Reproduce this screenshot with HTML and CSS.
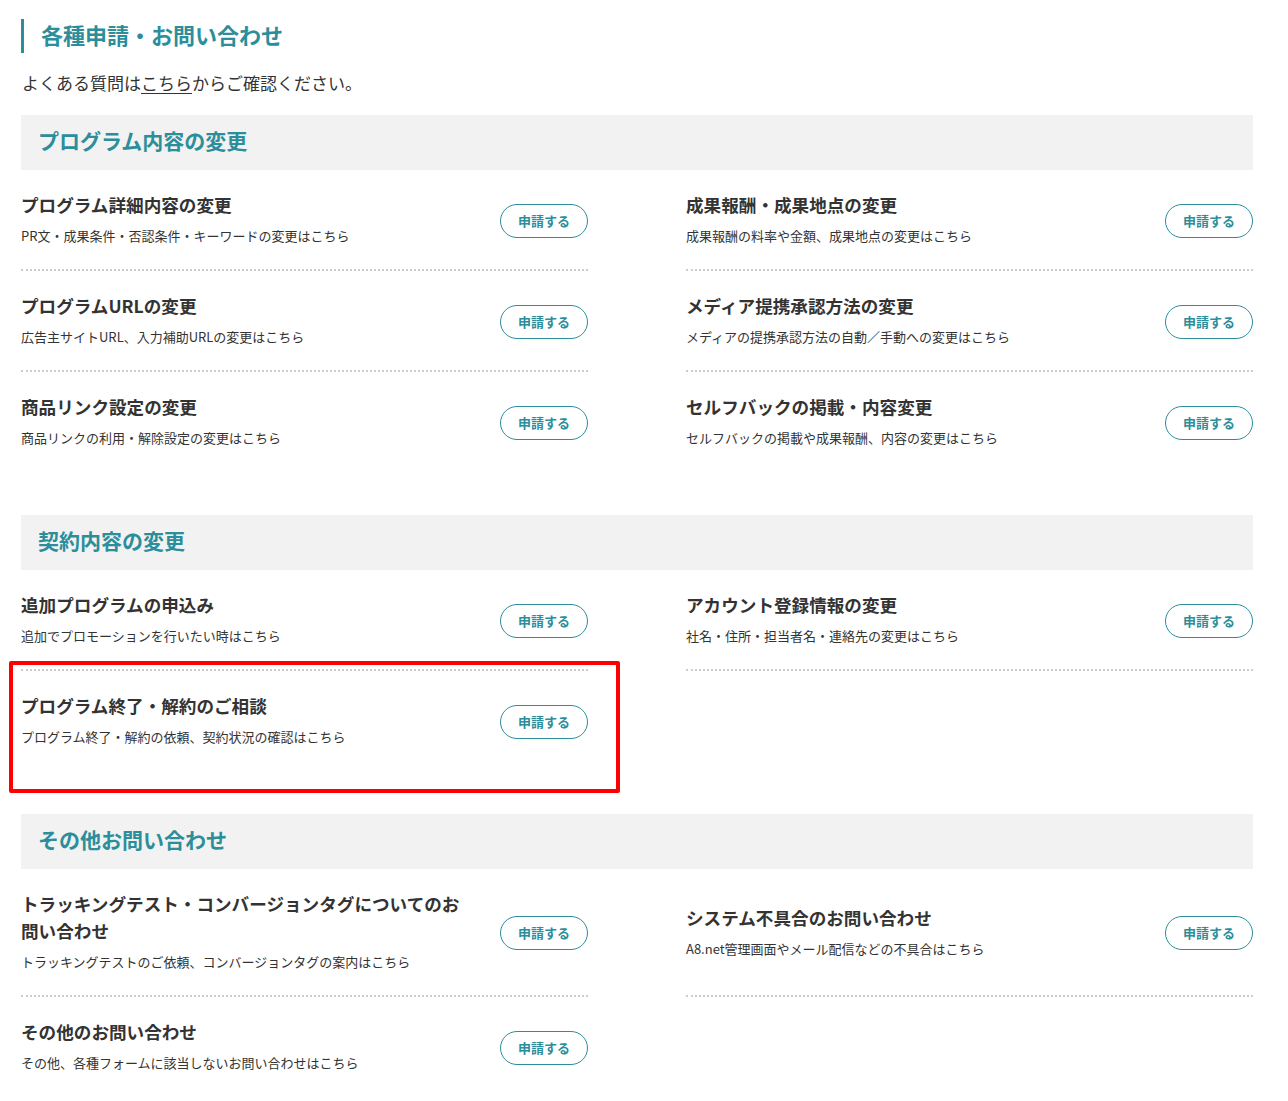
FILE: index.html
```html
<!DOCTYPE html>
<html lang="ja">
<head>
<meta charset="utf-8">
<title>各種申請・お問い合わせ</title>
<link rel="stylesheet" href="styles.css">
</head>
<body>
<div class="page">
  <h1 class="page-title">各種申請・お問い合わせ</h1>
  <p class="intro">よくある質問は<a href="#" class="intro-link">こちら</a>からご確認ください。</p>

  <section class="group">
    <h2 class="group-title">プログラム内容の変更</h2>
    <div class="grid">
      <div class="item">
        <div class="item-text"><h3 class="item-title">プログラム詳細内容の変更</h3><p class="item-desc">PR文・成果条件・否認条件・キーワードの変更はこちら</p></div>
        <a href="#" class="btn">申請する</a>
      </div>
      <div class="item">
        <div class="item-text"><h3 class="item-title">成果報酬・成果地点の変更</h3><p class="item-desc">成果報酬の料率や金額、成果地点の変更はこちら</p></div>
        <a href="#" class="btn">申請する</a>
      </div>
      <div class="item">
        <div class="item-text"><h3 class="item-title">プログラムURLの変更</h3><p class="item-desc">広告主サイトURL、入力補助URLの変更はこちら</p></div>
        <a href="#" class="btn">申請する</a>
      </div>
      <div class="item">
        <div class="item-text"><h3 class="item-title">メディア提携承認方法の変更</h3><p class="item-desc">メディアの提携承認方法の自動／手動への変更はこちら</p></div>
        <a href="#" class="btn">申請する</a>
      </div>
      <div class="item last">
        <div class="item-text"><h3 class="item-title">商品リンク設定の変更</h3><p class="item-desc">商品リンクの利用・解除設定の変更はこちら</p></div>
        <a href="#" class="btn">申請する</a>
      </div>
      <div class="item last">
        <div class="item-text"><h3 class="item-title">セルフバックの掲載・内容変更</h3><p class="item-desc">セルフバックの掲載や成果報酬、内容の変更はこちら</p></div>
        <a href="#" class="btn">申請する</a>
      </div>
    </div>
  </section>

  <section class="group">
    <h2 class="group-title">契約内容の変更</h2>
    <div class="grid">
      <div class="item">
        <div class="item-text"><h3 class="item-title">追加プログラムの申込み</h3><p class="item-desc">追加でプロモーションを行いたい時はこちら</p></div>
        <a href="#" class="btn">申請する</a>
      </div>
      <div class="item">
        <div class="item-text"><h3 class="item-title">アカウント登録情報の変更</h3><p class="item-desc">社名・住所・担当者名・連絡先の変更はこちら</p></div>
        <a href="#" class="btn">申請する</a>
      </div>
      <div class="item last highlighted">
        <div class="item-text"><h3 class="item-title">プログラム終了・解約のご相談</h3><p class="item-desc">プログラム終了・解約の依頼、契約状況の確認はこちら</p></div>
        <a href="#" class="btn">申請する</a>
        <span class="highlight-frame"></span>
      </div>
    </div>
  </section>

  <section class="group">
    <h2 class="group-title">その他お問い合わせ</h2>
    <div class="grid">
      <div class="item">
        <div class="item-text"><h3 class="item-title">トラッキングテスト・コンバージョンタグについてのお問い合わせ</h3><p class="item-desc">トラッキングテストのご依頼、コンバージョンタグの案内はこちら</p></div>
        <a href="#" class="btn">申請する</a>
      </div>
      <div class="item">
        <div class="item-text"><h3 class="item-title">システム不具合のお問い合わせ</h3><p class="item-desc">A8.net管理画面やメール配信などの不具合はこちら</p></div>
        <a href="#" class="btn">申請する</a>
      </div>
      <div class="item last">
        <div class="item-text"><h3 class="item-title">その他のお問い合わせ</h3><p class="item-desc">その他、各種フォームに該当しないお問い合わせはこちら</p></div>
        <a href="#" class="btn">申請する</a>
      </div>
    </div>
  </section>
</div>
</body>
</html>
```

FILE: styles.css
```css
* { box-sizing: border-box; }
html, body { margin: 0; padding: 0; background: #fff; }
body {
  font-family: "Noto Sans CJK JP", "Noto Sans", sans-serif;
  color: #333;
}
.page {
  width: 1232px;
  margin-left: 21px;
  padding-top: 19px;
  padding-bottom: 20px;
}
.page-title {
  margin: 0;
  border-left: 3px solid #2b8e9a;
  padding: 0 0 3px 17px;
  font-size: 22px;
  line-height: 31px;
  font-weight: 700;
  color: #2b8e9a;
}
.intro {
  margin: 18px 0 20px 1px;
  font-size: 17px;
  line-height: 24px;
  color: #333;
}
.intro-link { color: #333; text-decoration: underline; text-underline-offset: 3px; }
.group { margin-bottom: 43px; }
.group-title {
  margin: 0;
  background: #f2f2f2;
  height: 55px;
  line-height: 50px;
  padding: 0 0 5px 17px;
  font-size: 21px;
  font-weight: 700;
  color: #2b8e9a;
}
.grid {
  display: grid;
  grid-template-columns: 567px 567px;
  column-gap: 98px;
}
.item {
  display: flex;
  align-items: center;
  justify-content: space-between;
  padding: 21px 0 23px;
  border-bottom: 2px dotted #ccc;
}
.item.last { border-bottom: none; padding-bottom: 24px; }
.item-text { width: 455px; }
.item-title {
  margin: 0;
  font-size: 17.6px;
  line-height: 27px;
  font-weight: 700;
  color: #333;
}
.item-desc {
  margin: 8px 0 0;
  font-size: 13px;
  line-height: 20px;
  color: #333;
}
.btn {
  flex: 0 0 88px;
  width: 88px;
  height: 34px;
  margin-top: 4px;
  border: 1px solid #2b8e9a;
  border-radius: 17px;
  display: flex;
  align-items: center;
  justify-content: center;
  padding-bottom: 1px;
  font-size: 13px;
  font-weight: 700;
  color: #2b8e9a;
  text-decoration: none;
}
.highlighted { position: relative; }
.highlight-frame {
  position: absolute;
  left: -12px;
  right: -32px;
  top: -10px;
  bottom: -22px;
  border: 4px solid #f00;
  border-radius: 2px;
  pointer-events: none;
}
```
